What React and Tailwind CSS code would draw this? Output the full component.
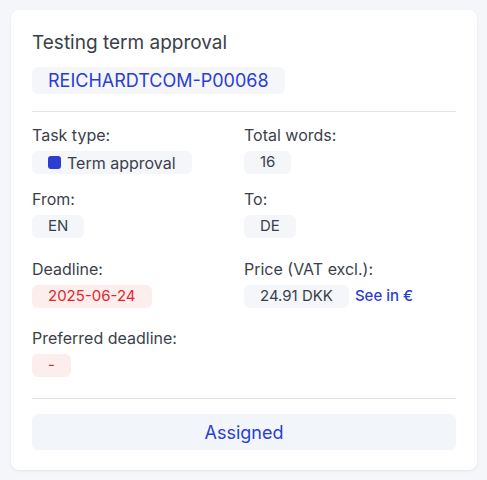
import React from "react";

const Label = ({ children }) => (
  <div className="text-[16px] leading-5 text-[#3b3f4a]">{children}</div>
);

const Chip = ({ children, className = "" }) => (
  <span
    className={`inline-flex h-[23px] items-center rounded-md px-4 text-[15px] ${className}`}
  >
    {children}
  </span>
);

const Field = ({ label, children }) => (
  <div className="flex flex-col gap-[6px]">
    <Label>{label}</Label>
    <div className="flex items-center gap-[6px]">{children}</div>
  </div>
);

export default function App() {
  return (
    <div
      className="min-h-screen bg-[#f5f6fa] px-[11px] pt-[10px]"
      style={{ fontFamily: "Inter, 'Open Sans', sans-serif" }}
    >
      <div className="w-[466px] rounded-lg bg-white px-[21px] pt-[22px] pb-[20px] shadow-[0_1px_3px_rgba(0,0,0,0.08)]">
        {/* HEADER */}
        <h1 className="text-[19px] leading-[22px] text-[#3b3f4a]">
          Testing term approval
        </h1>
        <div className="mt-[13px]">
          <span className="inline-flex h-[27px] items-center rounded-md bg-[#f4f6fa] px-4 text-[18px] text-[#2b3dd3]">
            REICHARDTCOM-P00068
          </span>
        </div>

        <div className="mt-[17px] border-t border-[#e3e4ea]" />

        {/* DETAILS */}
        <div className="mt-[13px] grid grid-cols-2">
          <Field label="Task type:">
            <Chip className="bg-[#f4f6fa] text-[16px] text-[#3b3f4a]">
              <span className="mr-[6px] h-[13px] w-[13px] rounded-[3px] bg-[#2b3dd3]" />
              Term approval
            </Chip>
          </Field>
          <Field label="Total words:">
            <Chip className="bg-[#f4f6fa] text-[#3b3f4a]">16</Chip>
          </Field>

          <div className="col-span-2 h-[15px]" />

          <Field label="From:">
            <Chip className="bg-[#f4f6fa] text-[#3b3f4a]">EN</Chip>
          </Field>
          <Field label="To:">
            <Chip className="bg-[#f4f6fa] text-[#3b3f4a]">DE</Chip>
          </Field>

          <div className="col-span-2 h-[21px]" />

          <Field label="Deadline:">
            <Chip className="bg-[#fdeeee] text-[#e3262b]">2025-06-24</Chip>
          </Field>
          <Field label="Price (VAT excl.):">
            <Chip className="bg-[#f4f6fa] text-[#3b3f4a]">24.91 DKK</Chip>
            <span className="text-[15px] font-medium text-[#2b3dd3]">
              See in €
            </span>
          </Field>

          <div className="col-span-2 h-[20px]" />

          <Field label="Preferred deadline:">
            <Chip className="bg-[#fdeeee] text-[#e3262b]">-</Chip>
          </Field>
        </div>

        <div className="mt-[21px] border-t border-[#e3e4ea]" />

        <button className="mt-[15px] flex h-[36px] w-full items-center justify-center rounded-md bg-[#f2f6fb] text-[18px] text-[#2b3dd3]">
          Assigned
        </button>
      </div>
    </div>
  );
}
